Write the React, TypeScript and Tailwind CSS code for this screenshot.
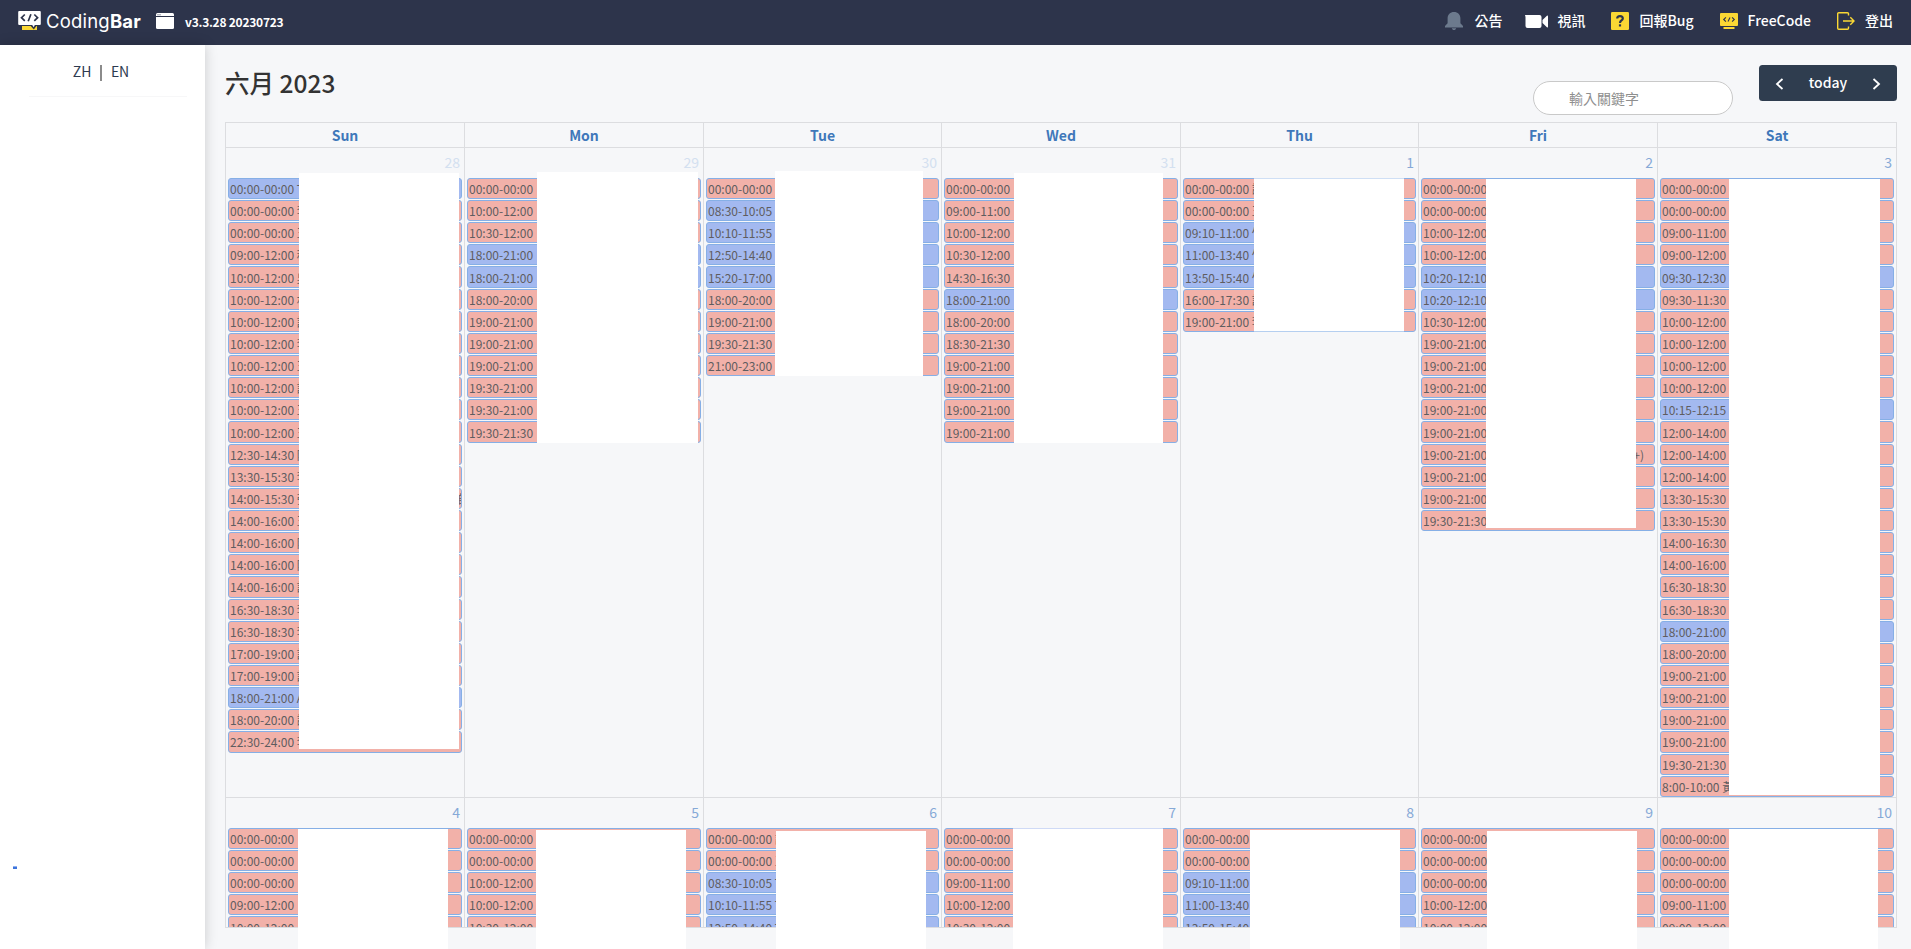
import React from 'react';

type DayData = { n: string; muted?: boolean; events: string[] };

// Each event is "HH:MM-HH:MM title"; a leading "*" marks the blue category.
const WEEK_ONE: DayData[] = [
  {
    n: '28',
    muted: true,
    events: [
      '*00:00-00:00 T', '00:00-00:00 李', '00:00-00:00 王', '09:00-12:00 程', '10:00-12:00 吳', '10:00-12:00 林',
      '10:00-12:00 許', '10:00-12:00 李', '10:00-12:00 王', '10:00-12:00 許', '10:00-12:00 王', '10:00-12:00 王',
      '12:30-14:30 陳', '13:30-15:30 李', '14:00-15:30 張', '14:00-16:00 王', '14:00-16:00 陳', '14:00-16:00 陳',
      '14:00-16:00 許', '16:30-18:30 李', '16:30-18:30 李', '17:00-19:00 許', '17:00-19:00 許', '*18:00-21:00 A',
      '18:00-20:00 謝', '22:30-24:00 李',
    ],
  },
  {
    n: '29',
    muted: true,
    events: [
      '00:00-00:00', '10:00-12:00', '10:30-12:00', '*18:00-21:00', '*18:00-21:00', '18:00-20:00',
      '19:00-21:00', '19:00-21:00', '19:00-21:00', '19:30-21:00', '19:30-21:00', '19:30-21:30',
    ],
  },
  {
    n: '30',
    muted: true,
    events: [
      '00:00-00:00', '*08:30-10:05', '*10:10-11:55', '*12:50-14:40', '*15:20-17:00', '18:00-20:00',
      '19:00-21:00', '19:30-21:30', '21:00-23:00',
    ],
  },
  {
    n: '31',
    muted: true,
    events: [
      '00:00-00:00', '09:00-11:00', '10:00-12:00', '10:30-12:00', '14:30-16:30', '*18:00-21:00', '18:00-20:00',
      '18:30-21:30', '19:00-21:00', '19:00-21:00', '19:00-21:00', '19:00-21:00',
    ],
  },
  {
    n: '1',
    events: [
      '00:00-00:00 謝', '00:00-00:00 王', '*09:10-11:00 竹', '*11:00-13:40 竹', '*13:50-15:40 竹', '16:00-17:30 許',
      '19:00-21:00 李',
    ],
  },
  {
    n: '2',
    events: [
      '00:00-00:00', '00:00-00:00', '10:00-12:00', '10:00-12:00', '*10:20-12:10', '*10:20-12:10', '10:30-12:00',
      '19:00-21:00', '19:00-21:00', '19:00-21:00', '19:00-21:00', '19:00-21:00', '19:00-21:00', '19:00-21:00',
      '19:00-21:00', '19:30-21:30',
    ],
  },
  {
    n: '3',
    events: [
      '00:00-00:00', '00:00-00:00', '09:00-11:00', '09:00-12:00', '*09:30-12:30', '09:30-11:30', '10:00-12:00',
      '10:00-12:00', '10:00-12:00', '10:00-12:00', '*10:15-12:15', '12:00-14:00', '12:00-14:00', '12:00-14:00',
      '13:30-15:30', '13:30-15:30', '14:00-16:30', '14:00-16:00', '16:30-18:30', '16:30-18:30', '*18:00-21:00',
      '18:00-20:00', '19:00-21:00', '19:00-21:00', '19:00-21:00', '19:00-21:00', '19:30-21:30', '8:00-10:00 黃',
    ],
  },
];

const WEEK_TWO: DayData[] = [
  { n: '4', events: ['00:00-00:00', '00:00-00:00', '00:00-00:00', '09:00-12:00', '10:00-12:00'] },
  { n: '5', events: ['00:00-00:00', '00:00-00:00', '10:00-12:00', '10:00-12:00', '10:30-12:00'] },
  { n: '6', events: ['00:00-00:00 謝', '00:00-00:00 王', '*08:30-10:05 T', '*10:10-11:55 T', '*12:50-14:40 T'] },
  { n: '7', events: ['00:00-00:00', '00:00-00:00', '09:00-11:00', '10:00-12:00', '10:30-12:00'] },
  { n: '8', events: ['00:00-00:00', '00:00-00:00', '*09:10-11:00', '*11:00-13:40', '*13:50-15:40'] },
  { n: '9', events: ['00:00-00:00', '00:00-00:00', '00:00-00:00', '10:00-12:00', '10:00-12:00'] },
  { n: '10', events: ['00:00-00:00', '00:00-00:00', '00:00-00:00', '09:00-11:00', '09:00-12:00'] },
];

const DAY_NAMES = ['Sun', 'Mon', 'Tue', 'Wed', 'Thu', 'Fri', 'Sat'];

// Seven day columns, in whole pixels.
const COLUMNS = 'grid shrink-0 grid-cols-[239px_239px_238px_239px_238px_239px_239px]';

// White panels that lie over the event titles.
const COVERS = [
  'left-[299px] top-[173px] w-[160px] h-[576px]',
  'left-[537px] top-[172px] w-[161px] h-[271px]',
  'left-[775px] top-[171px] w-[148px] h-[205px]',
  'left-[1014px] top-[173px] w-[149px] h-[270px]',
  'left-[1254px] top-[179px] w-[150px] h-[152px]',
  'left-[1486px] top-[179px] w-[150px] h-[349px]',
  'left-[1729px] top-[179px] w-[151px] h-[616px]',
  'left-[298px] top-[829px] w-[150px] h-[120px]',
  'left-[536px] top-[830px] w-[150px] h-[119px]',
  'left-[776px] top-[831px] w-[150px] h-[118px]',
  'left-[1013px] top-[829px] w-[150px] h-[120px]',
  'left-[1250px] top-[830px] w-[150px] h-[119px]',
  'left-[1487px] top-[831px] w-[150px] h-[118px]',
  'left-[1729px] top-[829px] w-[149px] h-[120px]',
];

// Outer borders of an event that stay faintly visible through a cover.
const FAINT_LINES = [
  'left-[1254px] top-[178px] w-[150px] h-px bg-[#cfdff5]',
  'left-[1254px] top-[331px] w-[150px] h-px bg-[#b5cff0]',
  'left-[1013px] top-[828px] w-[150px] h-px bg-[#cfdaf6]',
];

function EventBar({ label, trailing }: { label: string; trailing?: string }) {
  const blue = label.startsWith('*');
  return (
    <div
      className={`mx-[2px] mb-px flex h-[21.140625px] items-center justify-between overflow-hidden rounded-[3px] border border-[#86afe6] pl-px text-[12px] leading-[19px] whitespace-nowrap text-[#5f5d60] ${
        blue ? 'bg-[#a3b9f0]' : 'bg-[#f2b1a9]'
      }`}
    >
      <span>{label.replace('*', '')}</span>
      {trailing && <span className={trailing === '+)' ? 'mr-[10px]' : '-mr-[9px]'}>{trailing}</span>}
    </div>
  );
}

function Day({ day }: { day: DayData }) {
  return (
    <div className="min-w-0 border-l border-[#dcdde0]">
      <div
        className={`flex h-[29.900px] items-center justify-end pr-[4px] pb-[1px] text-[14px] leading-[21px] ${
          day.muted ? 'text-[#d3e0f0]' : 'text-[#86a9d7]'
        }`}
      >
        {day.n}
      </div>
      {day.events.map((e, i) => (
        <EventBar
          key={i}
          label={e}
          trailing={day.n === '2' && i === 12 ? '+)' : day.n === '28' && i === 14 ? '師' : undefined}
        />
      ))}
    </div>
  );
}

function Logo() {
  return (
    <svg className="h-[20px] w-[24px]" viewBox="0 0 24 20" fill="none">
      <path d="M4 15h15v4H4z" fill="#fbd834" />
      <path d="M1.200 0h20.600a1 1 0 0 1 1 1v12a1 1 0 0 1-1 1H1.200a1 1 0 0 1-1-1V1a1 1 0 0 1 1-1z" fill="#fff" />
      <path d="M11.800 14h7.400l-3.400 4.600z" fill="#2d344b" />
      <path d="M13.500 13h3.800l-1.600 3.300z" fill="#fff" />
      <path d="M6.800 3.500 3.500 6.700l3.300 3.200M16.300 3.500l3.300 3.200-3.300 3.200M12.900 3.200l-2.700 7" stroke="#2d344b" strokeWidth="1.700" />
    </svg>
  );
}

function TopBar() {
  return (
    <header className="flex h-[45px] shrink-0 items-center bg-[#2d344b] pb-[3px] text-[14px] font-medium text-white">
      <div className="flex items-center pl-[18px]">
        <Logo />
        <div className="ml-[4px] w-[96px] font-['Inter'] text-[18.500px] leading-none font-normal tracking-[0.200px] whitespace-nowrap">
          Coding<span className="font-bold">Bar</span>
        </div>
        <svg className="ml-[14px] h-[16px] w-[18px]" viewBox="0 0 18 16">
          <rect width="18" height="16" rx="1.500" fill="#fff" />
          <path d="M0 3.500h18" stroke="#2d344b" strokeWidth="1" />
          <path d="M1.500 1.800h1M3.500 1.800h1" stroke="#2d344b" strokeWidth="1" />
        </svg>
        <span className="mt-[1px] ml-[11px] text-[12px] leading-[20px] font-bold tracking-[-0.250px]">v3.3.28 20230723</span>
      </div>
      <nav className="ml-auto flex items-center pr-[18px]">
        <svg className="h-[18px] w-[18px]" viewBox="0 0 18 18" fill="#6c7a8d">
          <path d="M9 0C5.200 0 2.600 2.700 2.600 6.200v5L0 14v1.500h18V14l-2.600-2.800v-5C15.400 2.700 12.800 0 9 0zM6.800 16.200h4.400C10.900 17.400 10.100 18 9 18s-1.900-.6-2.200-1.800z" />
        </svg>
        <span className="mb-[2px] ml-[11px]">公告</span>
        <svg className="ml-[23px] h-[13px] w-[24px]" viewBox="0 0 24 13" fill="#fff">
          <path d="M0 0h14.500A2 2 0 0 1 16.500 2v9a2 2 0 0 1-2 2H2.500A2 2 0 0 1 .5 11V2zM17.500 5l4.400-4.200q1.100-.7 1.100.6v10.200q0 1.300-1.100.6L17.500 8z" />
        </svg>
        <span className="mb-[2px] ml-[8px]">視訊</span>
        <svg className="ml-[26px] h-[18px] w-[18px]" viewBox="0 0 18 18" fill="none">
          <rect width="18" height="18" rx="1.200" fill="#fbd834" />
          <path d="M6.200 6.500C6.200 3.200 11.800 3.200 11.800 6.500c0 2-2.800 2-2.800 4.400" stroke="#2d344b" strokeWidth="2.200" />
          <path d="M7.900 12.300h2.200v2.200H7.900z" fill="#2d344b" />
        </svg>
        <span className="mb-[2px] ml-[10px]">回報Bug</span>
        <svg className="ml-[26px] h-[16px] w-[18px]" viewBox="0 0 18 16" fill="none">
          <rect width="18" height="13" rx="1" fill="#fbd834" />
          <path d="M3.500 14h11v2h-11z" fill="#fbd834" />
          <path d="M5.900 4.300 3.700 6.500l2.200 2.200M12.100 4.300l2.200 2.200-2.200 2.200M10 4.500 8 8.500" stroke="#2d344b" strokeWidth="1.100" />
        </svg>
        <span className="mb-[2px] ml-[10px]">FreeCode</span>
        <svg className="ml-[26px] h-[18px] w-[18px]" viewBox="0 0 18 18" fill="none" stroke="#fbd834" strokeWidth="1.400">
          <path d="M11.500 3.500V1.700a1 1 0 0 0-1-1H1.700a1 1 0 0 0-1 1v14.600a1 1 0 0 0 1 1h8.800a1 1 0 0 0 1-1v-1.800M6 9h11M13.300 5.200 17 9l-3.700 3.800" />
        </svg>
        <span className="mb-[2px] ml-[10px]">登出</span>
      </nav>
    </header>
  );
}

export default function App() {
  return (
    <div className="relative flex h-[949px] w-full flex-col overflow-hidden bg-[#f6f7f9] font-['Noto_Sans_CJK_TC','Noto_Sans',sans-serif]">
      <TopBar />
      <div className="flex min-h-0 flex-1">
        <aside className="flex w-[205px] shrink-0 flex-col bg-white shadow-[0_0_12px_rgba(0,0,0,0.18)]">
          <div className="mr-[18px] ml-[29px] flex h-[52px] items-center justify-center gap-[9px] border-b border-[#f7f7f8] pt-[2px] pr-[14px] text-[14px] text-[#2d3a50]">
            <span>ZH</span>
            <span className="mt-[2px] h-[16px] w-[1.500px] bg-[#8b8b8b]" />
            <span>EN</span>
          </div>
          <div className="mt-auto mb-[80px] ml-[13px] h-[3px] w-[4px] border-t border-[#8fb0ee] bg-[#3d74dc]" />
        </aside>
        <main className="flex min-w-0 flex-1 flex-col pr-[14px] pl-[20px]">
          <div className="flex h-[77px] shrink-0 items-start">
            <h1 className="mt-[19px] text-[24.500px] leading-[37px] font-medium text-[#333]">六月 2023</h1>
            <div className="mt-[36px] ml-auto flex h-[34px] w-[200px] items-center rounded-full border border-[#c9c9c9] bg-white pl-[35px] text-[14px] text-[#8f8f8f]">
              輸入關鍵字
            </div>
            <div className="mt-[20px] ml-[26px] flex h-[36px] w-[138px] items-center justify-between rounded-[3.500px] bg-[#2f3d4f] px-[16px] text-[14px] font-medium text-white">
              <svg className="mt-[2px] h-[12px] w-[9px]" viewBox="0 0 9 12" fill="none" stroke="#fff" strokeWidth="1.800">
                <path d="M7.500 1 2 6l5.500 5" />
              </svg>
              <span className="pb-[1px]">today</span>
              <svg className="mt-[2px] h-[12px] w-[9px]" viewBox="0 0 9 12" fill="none" stroke="#fff" strokeWidth="1.800">
                <path d="M1.500 1 7 6l-5.500 5" />
              </svg>
            </div>
          </div>
          <div className="flex h-[806px] w-[1672px] shrink-0 flex-col overflow-hidden border border-l-0 border-[#dcdde0]">
            <div className={`${COLUMNS} h-[24px]`}>
              {DAY_NAMES.map((d) => (
                <div
                  key={d}
                  className="flex items-center justify-center border-l border-[#dcdde0] text-[14px] leading-[21px] font-bold text-[#3f78ba]"
                >
                  {d}
                </div>
              ))}
            </div>
            <div className={`${COLUMNS} h-[650px] border-t border-[#dcdde0]`}>
              {WEEK_ONE.map((d) => (
                <Day key={d.n} day={d} />
              ))}
            </div>
            <div className={`${COLUMNS} h-[200px] border-t border-[#dcdde0]`}>
              {WEEK_TWO.map((d) => (
                <Day key={d.n} day={d} />
              ))}
            </div>
          </div>
        </main>
      </div>
      {COVERS.map((c) => (
        <div key={c} className={`absolute bg-white ${c}`} />
      ))}
      {FAINT_LINES.map((c) => (
        <div key={c} className={`absolute ${c}`} />
      ))}
    </div>
  );
}
